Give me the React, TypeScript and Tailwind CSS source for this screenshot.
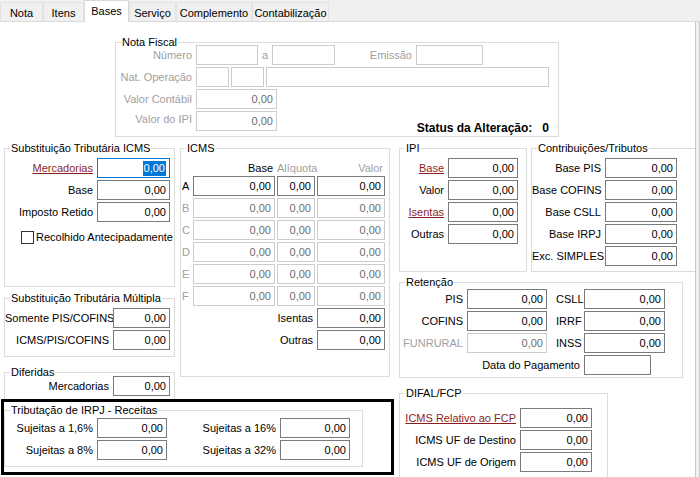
import React from "react";

type GroupProps = { title: string; className: string; children?: React.ReactNode };

const Group = ({ title, className, children }: GroupProps) => (
  <div className={`relative shrink-0 box-border border border-[#dcdcdc] ${className}`}>
    <span className="absolute -top-[8px] left-[5px] bg-white px-px leading-[14px] text-black">{title}</span>
    {children}
  </div>
);

type InputProps = { w: string; value?: string; disabled?: boolean; focus?: boolean; className?: string };

const Input = ({ w, value = "", disabled, focus, className = "" }: InputProps) => (
  <div
    className={`box-border shrink-0 h-[20px] ${w} border flex items-center justify-end pr-[3px] leading-none ${
      focus
        ? "border-[#0078d7] text-white"
        : disabled
          ? "border-[#cccccc] text-[#6d6d6d]"
          : "border-[#7a7a7a] text-black"
    } ${className}`}
  >
    {focus ? <span className="bg-[#0078d7] px-px py-[2px]">{value}</span> : value}
  </div>
);

type LabelProps = { w: string; text: string; link?: boolean; disabled?: boolean };

const Label = ({ w, text, link, disabled }: LabelProps) => (
  <span
    className={`${w} shrink-0 text-right pr-[4px] whitespace-nowrap ${
      link ? "text-[#8b1f1f] underline" : disabled ? "text-[#a0a0a0]" : "text-black"
    }`}
  >
    {text}
  </span>
);

const Row = ({ children, className = "" }: { children: React.ReactNode; className?: string }) => (
  <div className={`flex shrink-0 items-center h-[20px] ${className}`}>{children}</div>
);

const tabs = ["Nota", "Itens", "Bases", "Serviço", "Complemento", "Contabilização"];
const tabWidths = ["w-[43px]", "w-[41px]", "w-[45px]", "w-[47px]", "w-[76px]", "w-[77px]"];

const App = () => {
  return (
    <div className="w-[700px] h-[477px] overflow-hidden bg-[#f0f0f0] flex flex-col font-['Liberation_Sans',Arial,sans-serif] text-[11px] text-black">
      {/* abas */}
      <div className="flex h-[22px] shrink-0 border-b border-[#d9d9d9] box-border">
        {tabs.map((t, i) =>
          t === "Bases" ? (
            <div
              key={t}
              className={`${tabWidths[i]} h-[22px] bg-white border border-b-0 border-[#d9d9d9] flex justify-center pt-[2px] box-border relative z-10`}
            >
              {t}
            </div>
          ) : (
            <div
              key={t}
              className={`${tabWidths[i]} h-[19px] mt-[2px] border border-b-0 border-[#e3e3e3] flex justify-center pt-[2px] box-border`}
            >
              {t}
            </div>
          )
        )}
      </div>

      <div className="flex flex-1 overflow-hidden">
        <div className="w-[696px] h-[455px] shrink-0 overflow-hidden box-border bg-white border-r border-[#c8c8c8] flex flex-col">
          {/* Nota Fiscal */}
          <Group title="Nota Fiscal" className="ml-[115px] mt-[20px] w-[444px] h-[95px] pt-[2px] flex flex-col gap-[2px]">
            <Row>
              <Label w="w-[80px]" text="Número" disabled />
              <Input w="w-[62px]" disabled />
              <span className="w-[14px] pl-[4px] text-[#a0a0a0]">a</span>
              <Input w="w-[63px]" disabled />
              <Label w="w-[81px]" text="Emissão" disabled />
              <Input w="w-[67px]" disabled />
            </Row>
            <Row>
              <Label w="w-[80px]" text="Nat. Operação" disabled />
              <Input w="w-[33px]" disabled />
              <Input w="w-[33px]" disabled className="ml-[2px]" />
              <Input w="w-[283px]" disabled className="ml-[2px]" />
            </Row>
            <Row>
              <Label w="w-[80px]" text="Valor Contábil" disabled />
              <Input w="w-[81px]" value="0,00" disabled />
            </Row>
            <Row className="items-start">
              <Label w="w-[80px]" text="Valor do IPI" disabled />
              <div className="self-center">
                <Input w="w-[81px]" value="0,00" disabled />
              </div>
              <span className="ml-auto mr-[9px] mt-[10px] font-bold text-[12px] leading-[14px] whitespace-pre">
                Status da Alteração:   0
              </span>
            </Row>
          </Group>

          <div className="flex shrink-0 mt-[11px] pl-[4px]">
            {/* lado esquerdo */}
            <div className="flex flex-col">
              <div className="flex">
                <div className="flex flex-col w-[171px]">
                  <Group title="Substituição Tributária ICMS" className="h-[139px] pt-[9px] flex flex-col gap-[2px]">
                    <Row>
                      <Label w="w-[92px]" text="Mercadorias" link />
                      <Input w="w-[73px]" value="0,00" focus />
                    </Row>
                    <Row>
                      <Label w="w-[92px]" text="Base" />
                      <Input w="w-[73px]" value="0,00" />
                    </Row>
                    <Row>
                      <Label w="w-[92px]" text="Imposto Retido" />
                      <Input w="w-[73px]" value="0,00" />
                    </Row>
                    <div className="flex items-center mt-[6px] pl-[16px] h-[14px]">
                      <span className="w-[13px] h-[13px] box-border border border-[#333333] bg-white" />
                      <span className="ml-[2px]">Recolhido Antecipadamente</span>
                    </div>
                  </Group>
                  <Group title="Substituição Tributária Múltipla" className="mt-[11px] h-[59px] pt-[9px] flex flex-col gap-[2px]">
                    <Row>
                      <Label w="w-[108px]" text="Somente PIS/COFINS" />
                      <Input w="w-[57px]" value="0,00" />
                    </Row>
                    <Row>
                      <Label w="w-[108px]" text="ICMS/PIS/COFINS" />
                      <Input w="w-[57px]" value="0,00" />
                    </Row>
                  </Group>
                  <Group title="Diferidas" className="mt-[15px] h-[31px] pt-[3px]">
                    <Row>
                      <Label w="w-[108px]" text="Mercadorias" />
                      <Input w="w-[57px]" value="0,00" />
                    </Row>
                  </Group>
                </div>

                <Group title="ICMS" className="ml-[5px] w-[210px] h-[229px] pt-[13px] flex flex-col gap-[2px]">
                  <div className="flex h-[12px] items-center leading-none">
                    <span className="w-[12px]" />
                    <span className="w-[82px] text-right pr-[2px]">Base</span>
                    <span className="w-[40px] pl-[2px] text-[#a0a0a0]">Alíquota</span>
                    <span className="w-[70px] text-right pr-[2px] text-[#a0a0a0]">Valor</span>
                  </div>
                  {["A", "B", "C", "D", "E", "F"].map((l) => (
                    <Row key={l}>
                      <span className={`w-[12px] pl-[1px] ${l === "A" ? "text-black" : "text-[#a0a0a0]"}`}>{l}</span>
                      <Input w="w-[82px]" value="0,00" disabled={l !== "A"} />
                      <Input w="w-[38px]" value="0,00" disabled={l !== "A"} className="ml-[2px]" />
                      <Input w="w-[68px]" value="0,00" disabled={l !== "A"} className="ml-[2px]" />
                    </Row>
                  ))}
                  <Row>
                    <Label w="w-[136px]" text="Isentas" />
                    <Input w="w-[68px]" value="0,00" />
                  </Row>
                  <Row>
                    <Label w="w-[136px]" text="Outras" />
                    <Input w="w-[68px]" value="0,00" />
                  </Row>
                </Group>
              </div>

              {/* destaque */}
              <div className="relative shrink-0 z-10 -mt-[4px] -ml-[3px] w-[393px] h-[76px] box-border border-[3px] border-black bg-white pt-[8px]">
                <Group title="Tributação de IRPJ - Receitas" className="w-[359px] h-[57px] pt-[7px] flex flex-col gap-[2px]">
                  <Row>
                    <Label w="w-[92px]" text="Sujeitas a 1,6%" />
                    <Input w="w-[70px]" value="0,00" />
                    <Label w="w-[113px]" text="Sujeitas a 16%" />
                    <Input w="w-[70px]" value="0,00" />
                  </Row>
                  <Row>
                    <Label w="w-[92px]" text="Sujeitas a 8%" />
                    <Input w="w-[70px]" value="0,00" />
                    <Label w="w-[113px]" text="Sujeitas a 32%" />
                    <Input w="w-[70px]" value="0,00" />
                  </Row>
                </Group>
              </div>
            </div>

            {/* lado direito */}
            <div className="flex flex-col ml-[5px]">
              <div className="flex">
                <Group title="IPI" className="w-[128px] h-[124px] pt-[9px] flex flex-col gap-[2px]">
                  <Row>
                    <Label w="w-[48px]" text="Base" link />
                    <Input w="w-[70px]" value="0,00" />
                  </Row>
                  <Row>
                    <Label w="w-[48px]" text="Valor" />
                    <Input w="w-[70px]" value="0,00" />
                  </Row>
                  <Row>
                    <Label w="w-[48px]" text="Isentas" link />
                    <Input w="w-[70px]" value="0,00" />
                  </Row>
                  <Row>
                    <Label w="w-[48px]" text="Outras" />
                    <Input w="w-[70px]" value="0,00" />
                  </Row>
                </Group>
                <Group title="Contribuições/Tributos" className="ml-[4px] w-[166px] h-[124px] pt-[9px] flex flex-col gap-[2px]">
                  {["Base PIS", "Base COFINS", "Base CSLL", "Base IRPJ", "Exc. SIMPLES"].map((t) => (
                    <Row key={t}>
                      <Label w="w-[73px]" text={t} />
                      <Input w="w-[72px]" value="0,00" />
                    </Row>
                  ))}
                </Group>
              </div>

              <Group title="Retenção" className="mt-[10px] w-[284px] h-[96px] pt-[6px] flex flex-col gap-[2px]">
                <Row>
                  <Label w="w-[67px]" text="PIS" />
                  <Input w="w-[80px]" value="0,00" />
                  <span className="w-[37px] pl-[9px]">CSLL</span>
                  <Input w="w-[81px]" value="0,00" />
                </Row>
                <Row>
                  <Label w="w-[67px]" text="COFINS" />
                  <Input w="w-[80px]" value="0,00" />
                  <span className="w-[37px] pl-[9px]">IRRF</span>
                  <Input w="w-[81px]" value="0,00" />
                </Row>
                <Row>
                  <Label w="w-[67px]" text="FUNRURAL" disabled />
                  <Input w="w-[80px]" value="0,00" disabled />
                  <span className="w-[37px] pl-[9px]">INSS</span>
                  <Input w="w-[81px]" value="0,00" />
                </Row>
                <Row>
                  <Label w="w-[184px]" text="Data do Pagamento" />
                  <Input w="w-[67px]" />
                </Row>
              </Group>

              <Group title="DIFAL/FCP" className="mt-[15px] w-[209px] h-[90px] pt-[14px] flex flex-col gap-[2px]">
                <Row>
                  <Label w="w-[120px]" text="ICMS Relativo ao FCP" link />
                  <Input w="w-[72px]" value="0,00" />
                </Row>
                <Row>
                  <Label w="w-[120px]" text="ICMS UF de Destino" />
                  <Input w="w-[72px]" value="0,00" />
                </Row>
                <Row>
                  <Label w="w-[120px]" text="ICMS UF de Origem" />
                  <Input w="w-[72px]" value="0,00" />
                </Row>
              </Group>
            </div>
          </div>
        </div>
        <div className="w-[4px] h-[455px] shrink-0 box-border border-r border-[#c8c8c8]" />
      </div>
    </div>
  );
};

export default App;
